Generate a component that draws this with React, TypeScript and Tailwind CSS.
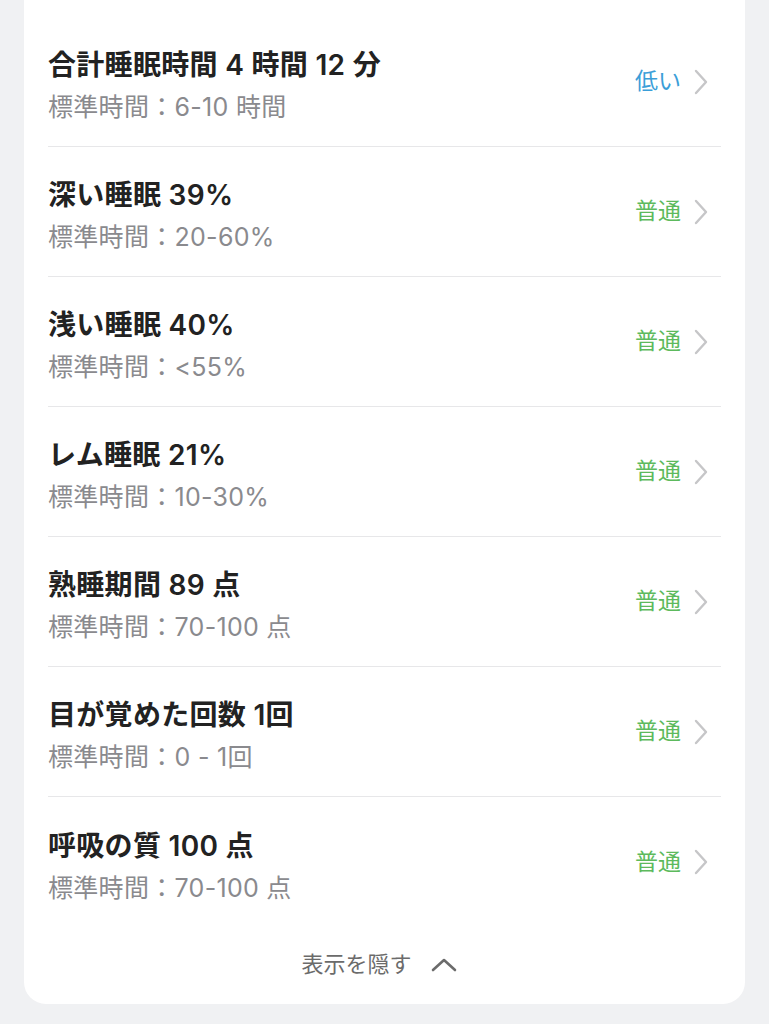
import React from "react";

type Level = "low" | "normal";

const rows: { title: string; range: string; level: Level }[] = [
  { title: "合計睡眠時間 4 時間 12 分", range: "標準時間：6-10 時間", level: "low" },
  { title: "深い睡眠 39%", range: "標準時間：20-60%", level: "normal" },
  { title: "浅い睡眠 40%", range: "標準時間：<55%", level: "normal" },
  { title: "レム睡眠 21%", range: "標準時間：10-30%", level: "normal" },
  { title: "熟睡期間 89 点", range: "標準時間：70-100 点", level: "normal" },
  { title: "目が覚めた回数 1回", range: "標準時間：0 - 1回", level: "normal" },
  { title: "呼吸の質 100 点", range: "標準時間：70-100 点", level: "normal" },
];

function Chevron() {
  return (
    <svg width="16" height="28" viewBox="0 0 16 28" fill="none">
      <path d="M3 3l10 11L3 25" stroke="#c6c6c8" strokeWidth="2.4" strokeLinecap="round" strokeLinejoin="round" />
    </svg>
  );
}

function MetricRow({ title, range, level, last }: { title: string; range: string; level: Level; last: boolean }) {
  return (
    <div className={`flex items-center h-[130px] ${last ? "" : "border-b border-[#e7e7e9]"}`}>
      <div className="flex-1 pt-[6px]">
        <div className="text-[28px] leading-[36px] font-semibold text-[#222222] tracking-[0.3px]">{title}</div>
        <div className="mt-[9px] text-[25px] leading-[30px] text-[#8a8a8e] tracking-[0.3px]">{range}</div>
      </div>
      <div className="flex items-center gap-[12px] pr-[12px]">
        <span className={`text-[23px] ${level === "low" ? "text-[#3a9ed8]" : "text-[#5dba5d]"}`}>
          {level === "low" ? "低い" : "普通"}
        </span>
        <Chevron />
      </div>
    </div>
  );
}

export default function App() {
  return (
    <div
      className="min-h-screen bg-[#f0f1f3] px-[24px] pb-[20px]"
      style={{ fontFamily: 'Inter, "Noto Sans CJK JP", sans-serif' }}
    >
      <div className="bg-white rounded-b-[22px] px-[24px] pt-[17px]">
        {rows.map((r, i) => (
          <MetricRow key={r.title} {...r} last={i === rows.length - 1} />
        ))}

        {/* collapse toggle */}
        <div className="flex items-center justify-center gap-[18px] h-[77px] pb-[2px] pr-[10px] text-[22px] text-[#6b6b6b]">
          <span>表示を隠す</span>
          <svg width="28" height="16" viewBox="0 0 28 16" fill="none">
            <path d="M3 13L14 3l11 10" stroke="#6b6b6b" strokeWidth="2.6" strokeLinecap="round" strokeLinejoin="round" />
          </svg>
        </div>
      </div>
    </div>
  );
}
